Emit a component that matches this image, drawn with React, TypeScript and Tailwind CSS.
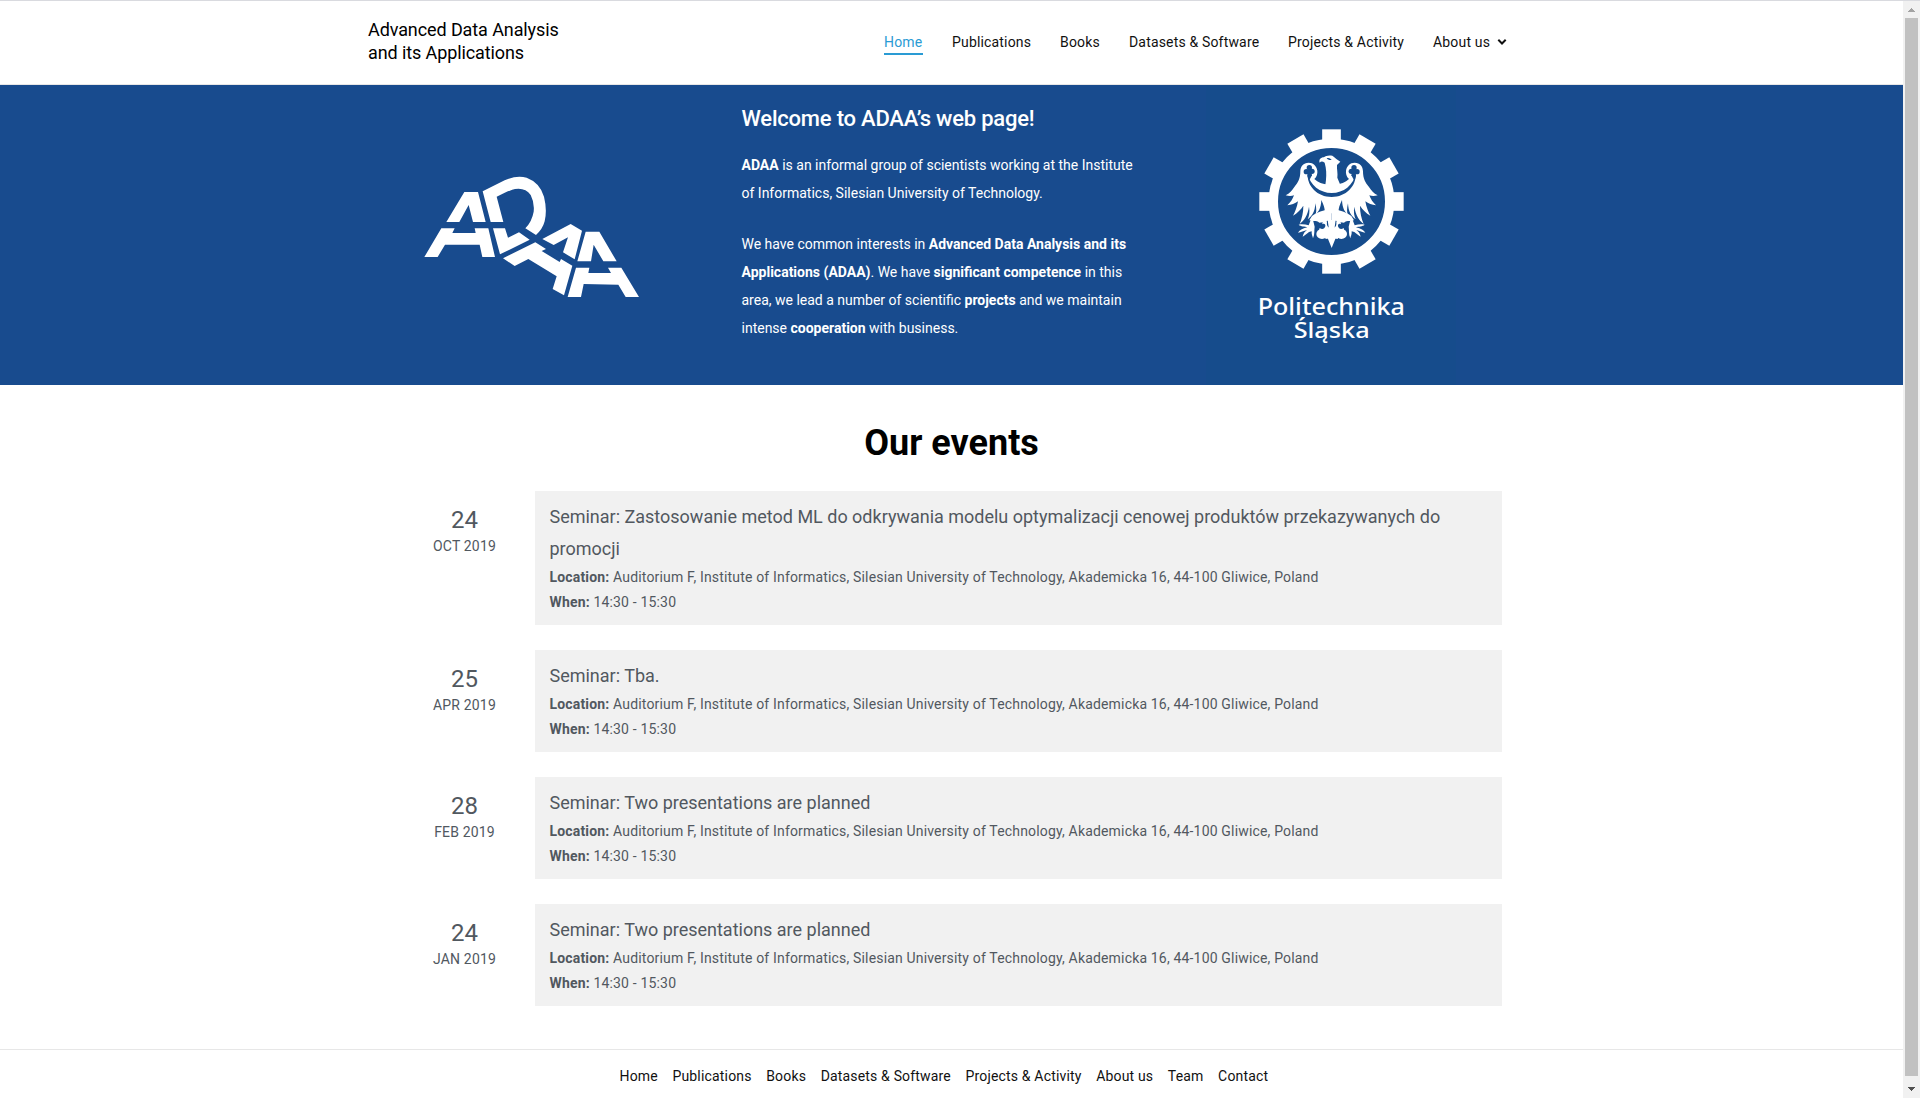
const NAV = [
  { label: 'Publications', cls: 'w-[78px] ml-[29px]' },
  { label: 'Books', cls: 'w-[40px] ml-[30px]' },
  { label: 'Datasets & Software', cls: 'w-[130px] ml-[29px]' },
  { label: 'Projects & Activity', cls: 'w-[116px] ml-[29px]' },
  { label: 'About us', cls: 'w-[57px] ml-[29px]' },
];

const FOOTER = ['Home', 'Publications', 'Books', 'Datasets & Software', 'Projects & Activity', 'About us', 'Team', 'Contact'];

const EVENTS = [
  { day: '24', month: 'OCT 2019', title: 'Seminar: Zastosowanie metod ML do odkrywania modelu optymalizacji cenowej produktów przekazywanych do promocji' },
  { day: '25', month: 'APR 2019', title: 'Seminar: Tba.' },
  { day: '28', month: 'FEB 2019', title: 'Seminar: Two presentations are planned' },
  { day: '24', month: 'JAN 2019', title: 'Seminar: Two presentations are planned' },
];

const TEETH = [0, 30, 60, 90, 120, 150, 180, 210, 240, 270, 300, 330];

function AdaaLogo() {
  return (
    <svg className="block h-[150px] w-[240px]" viewBox="0 0 720 450" fill="#fff" aria-label="ADAA">
      <path d="M163 96H204L227 186H189L176 135L148 186H109Z" />
      <path d="M94 205H134L127 219H197L194 205H235L255 291H217L209 254H105L83 291H43Z" />
      <path d="M218 94L284 61Q320 44 350 53Q390 68 402 110Q412 150 404 184Q398 207 378 225L346 205Q366 184 371 155Q374 128 362 105Q346 82 315 87Q303 89 260 110L280 186H242Z" />
      <path d="M249 205H285L294 233L327 217L359 239L270 283Z" />
      <path d="M376 247L408 267L395 273L449 306L453 297L487 317L462 406L428 387L440 349L355 297L314 318L279 295Z" />
      <path d="M397 237L482 192L516 212L494 298L459 277L474 232L431 255Z" />
      <path d="M527 215H568L620 304H580L551 254L543 304H502Z" />
      <path d="M498 323H538L535 339H603L594 323H634L687 411H647L625 374L521 372L513 411H473Z" />
    </svg>
  );
}

function EagleWing() {
  return (
    <g>
      <path d="M206 158C190 158 181 170 181 184C181 206 174 218 163 231C156 241 149 250 137 256C146 259 155 259 162 256C158 268 151 278 142 286C154 285 165 280 174 274C171 292 165 306 159 317C172 309 182 299 190 287C190 307 186 325 179 342C193 330 203 316 207 290C210 306 207 319 203 328C216 318 225 306 226 280C230 296 229 306 227 313C236 305 243 294 244 270C251 285 255 296 254 304L262 306L275 300V222C256 226 236 219 223 207C231 200 233 190 232 182C230 168 220 158 206 158Z" />
      <g fill="#164c8c">
        <circle cx="208" cy="173" r="8" />
        <circle cx="199" cy="185" r="8" />
        <circle cx="216" cy="184" r="8" />
        <path d="M203 180H213L216 196L207 212L202 198Z" />
      </g>
    </g>
  );
}

function EagleFoot() {
  return (
    <g>
      <path d="M275 298C250 300 229 308 216 318L208 331L221 333C229 333 233 334 238 338L249 337C253 334 264 331 275 331Z" />
      <path d="M218 326L224 350C222 361 225 372 219 385C218 378 214 374 215 364L207 366C202 369 198 375 188 380C190 370 195 364 201 360C192 362 182 367 174 368C178 361 187 356 202 352C195 349 182 350 176 344C185 341 196 343 206 346L212 330Z" />
      <path d="M275 354C268 354 264 351 262 347C259 339 263 336 259 332C252 329 246 336 247 343C253 339 257 344 256 349C254 357 246 359 239 354C236 363 241 369 250 369L257 387L275 384Z" />
      <ellipse cx="246" cy="372" rx="17" ry="15" />
    </g>
  );
}

function UniversityLogo() {
  return (
    <svg className="block h-[250px] w-[180px]" viewBox="0 0 540 750" fill="#fff">
      {TEETH.map((a) => (
        <rect key={a} x="246.500" y="58" width="56" height="36" transform={`rotate(${a} 274.500 274.500)`} />
      ))}
      <circle cx="274.500" cy="274.500" r="174.500" fill="none" stroke="#fff" strokeWidth="28" />
      <EagleWing />
      <g transform="matrix(-1 0 0 1 550 0)"><EagleWing /></g>
      <path d="M256 225C259 207 260 188 257 172L254 158C247 153 243 154 239 158C236 149 242 142 252 142C257 137 266 135 277 137L282 141L289 147L301 155L291 165C290 178 294 190 292 203L301 225L290 310H259Z" />
      <path d="M260 145C266 142 271 145 275 150C268 151 263 149 260 145Z" fill="#164c8c" />
      <path d="M203 192C210 225 240 249 275 249C311 249 340 225 347 192C349 228 318 261 275 261C232 261 201 228 203 192Z" fill="#164c8c" />
      <EagleFoot />
      <g transform="matrix(-1 0 0 1 550 0)"><EagleFoot /></g>
      <path d="M263 330H287L284 352L288 382L275 414L262 382L266 352Z" />
      <g fontFamily="Noto Sans, sans-serif" fontWeight="500">
        <text x="53" y="614" fontSize="73" textLength="442" lengthAdjust="spacingAndGlyphs">Politechnika</text>
        <text x="161" y="683" fontSize="66" textLength="228" lengthAdjust="spacingAndGlyphs">Śląska</text>
      </g>
    </svg>
  );
}

function Scrollbar() {
  return (
    <div className="flex h-[1097px] w-[17px] flex-none flex-col items-center bg-[#f1f1f1]">
      <svg className="h-[17px] w-[17px] flex-none" viewBox="0 0 17 17" fill="#a3a3a3" shapeRendering="crispEdges">
        <path d="M8 7h1v1h1v1h1v1h1v1H5v-1h1V9h1V8h1z" />
      </svg>
      <div className="w-[13px] flex-1 bg-[#c1c1c1]" />
      <svg className="h-[22px] w-[17px] flex-none" viewBox="0 0 17 22" fill="#505050" shapeRendering="crispEdges">
        <path d="M5 11h7v1h-1v1h-1v1H9v1H8v-1H7v-1H6v-1H5z" />
      </svg>
    </div>
  );
}

export default function App() {
  return (
    <div className="flex h-[1098px] w-[1920px] overflow-hidden border-t border-[#d9dadf] bg-white font-['Roboto',sans-serif] text-black">
      <div className="flex w-[1903px] flex-none flex-col">
        <header className="flex h-[84px] border-b border-[#e7e7e7]">
          <div className="ml-[368px] mt-[17px] w-[516px] text-[18px] leading-[23px] tracking-[-0.1px]">
            Advanced Data Analysis
            <br />
            and its Applications
          </div>
          <nav className="mt-[29px] flex h-[25px] text-[14px] leading-6 tracking-[0.17px] whitespace-nowrap text-[#111]">
            <a className="w-[39px] border-b-2 border-[#2a9bd4] text-[#2a9bd4]">Home</a>
            {NAV.map((n) => (
              <a key={n.label} className={n.cls}>{n.label}</a>
            ))}
            <svg className="ml-[7px] mt-[7px] h-[10px] w-[10px]" viewBox="0 0 10 10" fill="none" stroke="#111" strokeWidth="2">
              <path d="M1.300 2.800L5 6.500L8.700 2.800" />
            </svg>
          </nav>
        </header>

        <section className="flex h-[300px] flex-none bg-[#184b8e] text-white">
          <div className="ml-[410px] mt-[75px] w-[331.5px]">
            <AdaaLogo />
          </div>
          <div className="mt-[18px] w-[400px] whitespace-nowrap">
            <h2 className="text-[22px] leading-8 font-medium tracking-[-0.21px]">Welcome to ADAA’s web page!</h2>
            <p className="mt-4 text-[14px] leading-7">
              <b>ADAA</b> is an informal group of scientists working at the Institute
              <br />
              of Informatics, Silesian University of Technology.
            </p>
            <p className="mt-[23px] text-[14px] leading-7">
              We have common interests in <b>Advanced Data Analysis and its</b>
              <br />
              <b>Applications (ADAA)</b>. We have <b>significant competence</b> in this
              <br />
              area, we lead a number of scientific <b>projects</b> and we maintain
              <br />
              intense <b>cooperation</b> with business.
            </p>
          </div>
          <div className="ml-[64.5px] w-[250px] bg-[#164c8c] pt-[25px] pl-[34px]">
            <UniversityLogo />
          </div>
        </section>

        <main className="flex flex-col">
          <h1 className="mt-[34px] h-12 text-center text-[36px] leading-[48px] font-bold">Our events</h1>
          <div className="mt-6 ml-[393px] flex w-[1109px] flex-col gap-[25px] text-[#51585f]">
            {EVENTS.map((e) => (
              <article key={e.month} className="flex">
                <div className="w-[142px] flex-none pt-[13px] pl-px text-center">
                  <div className="text-[24px] leading-8">{e.day}</div>
                  <div className="text-[14px] leading-5 tracking-[0.17px]">{e.month}</div>
                </div>
                <div className="flex-1 bg-[#f1f1f1] py-[10px] pr-[15px] pl-[14.5px]">
                  <h3 className="text-[18px] leading-8 tracking-[-0.005px]">{e.title}</h3>
                  <p className="text-[14px] leading-[25px] tracking-[0.17px]">
                    <b>Location:</b> Auditorium F, Institute of Informatics, Silesian University of Technology, Akademicka 16, 44-100 Gliwice, Poland
                  </p>
                  <p className="text-[14px] leading-[25px] tracking-[0.17px]">
                    <b>When:</b> 14:30 - 15:30
                  </p>
                </div>
              </article>
            ))}
          </div>
        </main>

        <footer className="mt-[43px] flex h-12 gap-[14.6px] border-t border-[#e7e7e7] pt-[15px] pl-[619.5px] text-[14px] leading-[22px] tracking-[0.17px] whitespace-nowrap text-[#111]">
          {FOOTER.map((f) => (
            <a key={f}>{f}</a>
          ))}
        </footer>
      </div>
      <Scrollbar />
    </div>
  );
}
